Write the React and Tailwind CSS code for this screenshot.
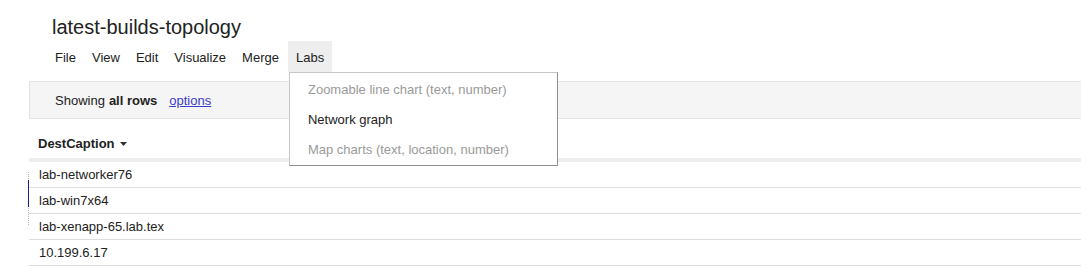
import React from "react";

const menuItems = ["File", "View", "Edit", "Visualize", "Merge"];

const labsItems = [
  { label: "Zoomable line chart (text, number)", enabled: false },
  { label: "Network graph", enabled: true },
  { label: "Map charts (text, location, number)", enabled: false },
];

const rows = ["lab-networker76", "lab-win7x64", "lab-xenapp-65.lab.tex", "10.199.6.17"];

const App = () => {
  return (
    <div
      className="relative w-[1081px] h-[268px] overflow-hidden bg-white text-[#222] text-[13px] leading-[15px]"
      style={{ fontFamily: '"Liberation Sans", Arial, sans-serif' }}
    >
      <h1 className="pl-[52px] pt-[15px] text-[20px] leading-[24px] text-[#222]">
        latest-builds-topology
      </h1>

      <div className="flex pl-[47px] mt-[2px] h-[31px]">
        {menuItems.map((item) => (
          <div key={item} className="px-2 pt-px flex items-center">
            {item}
          </div>
        ))}
        <div className="relative ml-px px-2 pt-px flex items-center bg-[#eeeeee]">
          Labs
          <div className="absolute left-px top-[31px] z-10 w-[269px] bg-white border border-[#c6c6c6] border-r-[#8e8e8e] border-b-[#8e8e8e] py-px">
            {labsItems.map((it) => (
              <div
                key={it.label}
                className={`h-[30px] flex items-center pl-[18px] whitespace-nowrap ${
                  it.enabled ? "text-[#222]" : "text-[#9a9a9a]"
                }`}
              >
                {it.label}
              </div>
            ))}
          </div>
        </div>
      </div>

      <div className="ml-[29px] mt-[9px]">
        <div className="h-[38px] bg-[#f5f5f5] border border-r-0 border-[#e3e3e3] flex items-center pl-[25px]">
          <span>Showing</span>
          <span className="font-bold ml-1">all rows</span>
          <a className="ml-3 text-[#3a3acc] underline" href="#">
            options
          </a>
        </div>

        <div className="h-[39px] pl-[9px] pt-[17px] flex items-start font-bold">
          <span>DestCaption</span>
          <svg className="ml-[5px] mt-[6px]" width="7" height="4" viewBox="0 0 7 4">
            <path d="M0 0h7L3.5 4z" fill="#333" />
          </svg>
        </div>
        <div className="h-[4px] bg-[#eeeeee]" />

        {rows.map((r) => (
          <div key={r} className="h-[26px] pl-[10px] flex items-center border-b border-[#dddddd]">
            {r}
          </div>
        ))}
      </div>

      <div className="absolute left-[28px] top-[172px] h-[53px] border-l border-dotted border-[#bbbbbb]" />
      <div className="absolute left-[28px] top-[180px] h-[27px] w-px bg-[#1c1c8c]" />
    </div>
  );
};

export default App;
